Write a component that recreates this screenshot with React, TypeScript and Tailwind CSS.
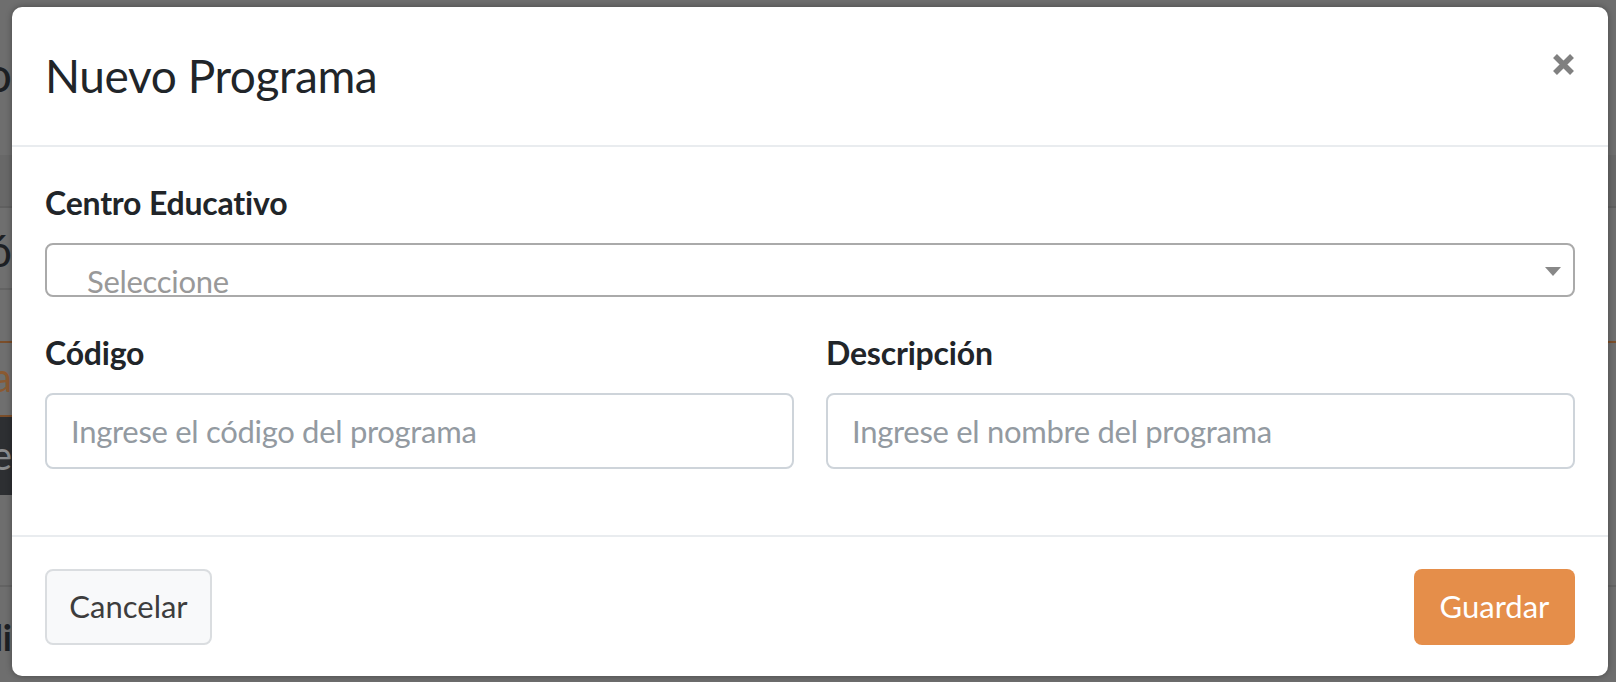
import React from "react";

const font = "font-['Lato','Open_Sans',sans-serif]";

// the page behind the modal, only a thin strip of it is visible
const PageBehind = () => {
  return (
    <div className="flex flex-col w-full h-full">
      <div className="h-[155px] bg-[#6e6e6e] flex justify-end w-[12px] overflow-hidden">
        <span className="text-[48px] leading-[48px] text-[#1d2024] mt-[50px] whitespace-nowrap">o</span>
      </div>
      <div className="h-[53px] bg-[#686868] border-b-2 border-[#606060]" />
      <div className="h-[82px] bg-[#6f6f6f] border-b-2 border-[#636363] flex justify-end w-[12px] overflow-hidden">
        <span className="text-[44px] leading-[48px] text-[#1d2024] mt-[18px] whitespace-nowrap">ó</span>
      </div>
      <div className="h-[53px] bg-[#6f6f6f] border-b-2 border-[#7b4e2a]" />
      <div className="h-[74px] bg-[#6f6f6f] border-b-2 border-[#7b4e2a] flex justify-end w-[12px] overflow-hidden">
        <span className="text-[40px] leading-[48px] text-[#8a5a32] mt-[10px] whitespace-nowrap">a</span>
      </div>
      <div className="h-[78px] bg-[#2d2f32] flex justify-end w-[12px] overflow-hidden">
        <span className="text-[40px] leading-[48px] text-[#8a8c8e] mt-[14px] whitespace-nowrap">e</span>
      </div>
      <div className="h-[92px] bg-[#6e6e6e] border-b-2 border-[#636363]" />
      <div className="flex-1 bg-[#6e6e6e] flex justify-end w-[12px] overflow-hidden">
        <span className="text-[36px] leading-[40px] font-bold text-[#1d2024] mt-[30px] whitespace-nowrap">di</span>
      </div>
    </div>
  );
};

const Field = ({ label, placeholder }: { label: string; placeholder: string }) => {
  return (
    <div className="flex flex-col">
      <label className="text-[32px] leading-[48px] font-bold text-[#212529] mb-[16px] tracking-[-0.2px]">{label}</label>
      <input
        className="h-[76px] w-full border-2 border-[#ced4da] rounded-[8px] px-[24px] text-[31px] tracking-[-0.3px] text-[#495057] placeholder:text-[#939aa1] outline-none bg-white"
        placeholder={placeholder}
      />
    </div>
  );
};

const App = () => {
  return (
    <div className={`relative w-[1616px] h-[682px] overflow-hidden bg-[#6e6e6e] ${font}`}>
      <PageBehind />

      <div className="absolute left-[12px] top-[7px] w-[1596px] h-[669px] bg-white rounded-[10px] shadow-[0_0_6px_rgba(0,0,0,0.35)] flex flex-col">
        {/* header */}
        <div className="h-[140px] border-b-2 border-[#e9ecef] flex justify-between px-[33px]">
          <h4 className="text-[46px] leading-[72px] tracking-[-0.4px] text-[#212529] mt-[33px]">Nuevo Programa</h4>
          <button className="mt-[46px] w-[23px] h-[23px]">
            <svg viewBox="0 0 23 23" width="23" height="23">
              <path d="M3 3 L20 20 M20 3 L3 20" stroke="#808080" strokeWidth="5.5" strokeLinecap="butt" />
            </svg>
          </button>
        </div>

        {/* body */}
        <div className="h-[388px] px-[33px] pt-[32px]">
          <label className="block text-[32px] leading-[48px] font-bold text-[#212529] mb-[16px] tracking-[-0.2px]">Centro Educativo</label>
          <div className="relative h-[54px] border-2 border-[#aaaaaa] rounded-[8px] overflow-hidden">
            <div className="pl-[40px] pt-[20px] text-[31px] leading-[32px] tracking-[-0.3px] text-[#999999]">Seleccione</div>
            <svg className="absolute right-[12px] top-[22px]" width="16" height="9" viewBox="0 0 16 9">
              <path d="M0 0 L16 0 L8 9 Z" fill="#888888" />
            </svg>
          </div>

          <div className="grid grid-cols-2 gap-x-[32px] mt-[32px]">
            <Field label="Código" placeholder="Ingrese el código del programa" />
            <Field label="Descripción" placeholder="Ingrese el nombre del programa" />
          </div>
        </div>

        {/* footer */}
        <div className="flex-1 border-t-2 border-[#e9ecef] px-[33px] flex justify-between items-center">
          <button className="w-[167px] h-[76px] bg-[#f8f9fa] border-2 border-[#dadde0] rounded-[8px] text-[31px] text-[#3d3d3d]">
            Cancelar
          </button>
          <button className="w-[161px] h-[76px] bg-[#e58e4a] rounded-[8px] text-[31px] text-white">
            Guardar
          </button>
        </div>
      </div>
    </div>
  );
};

export default App;
